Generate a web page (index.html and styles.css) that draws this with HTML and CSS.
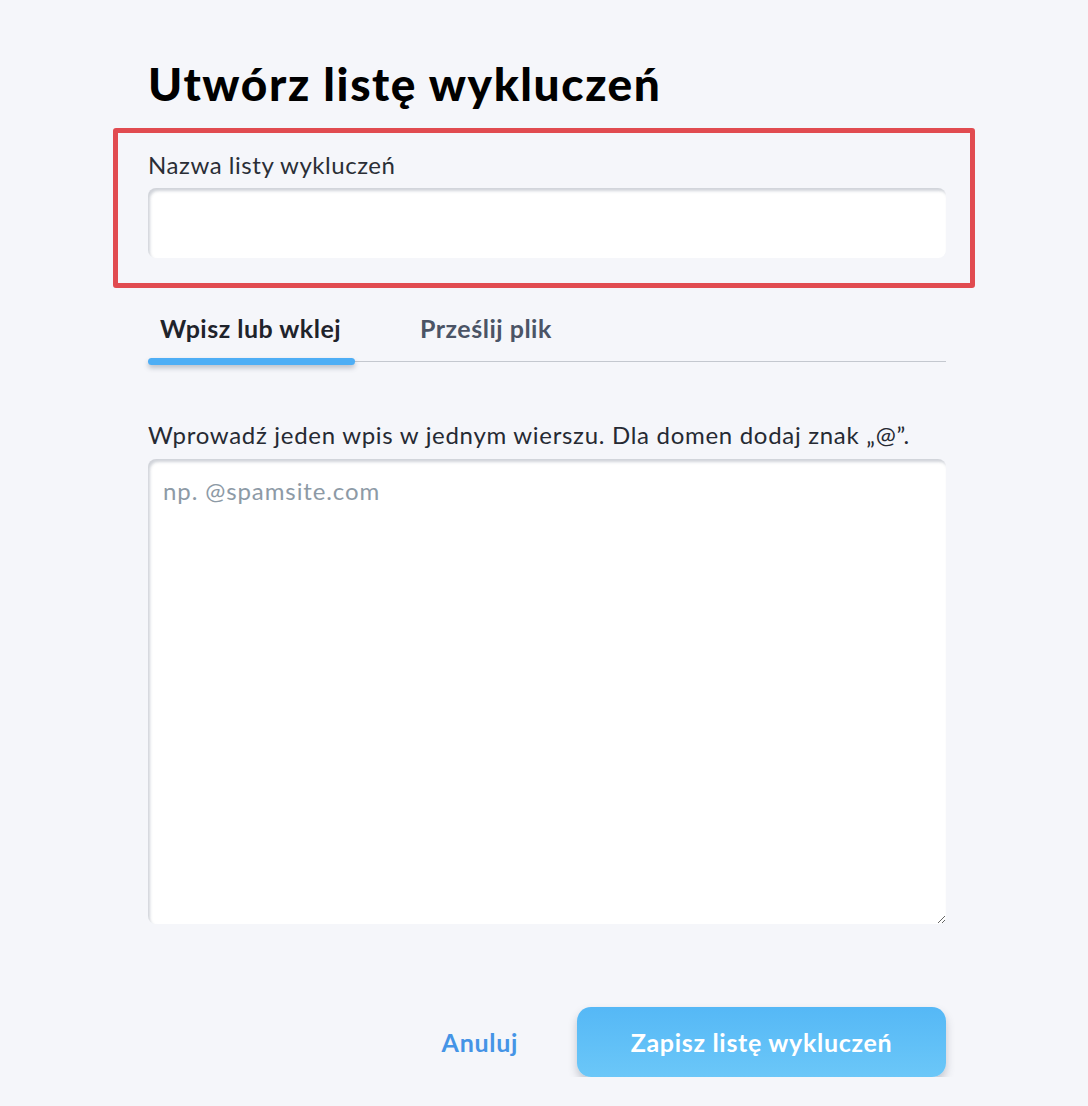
FILE: index.html
```html
<!DOCTYPE html>
<html lang="pl">
<head>
<meta charset="utf-8">
<title>Utwórz listę wykluczeń</title>
<link rel="stylesheet" href="styles.css">
</head>
<body>
<main class="page">
  <h1 class="title">Utwórz listę wykluczeń</h1>
  <div class="highlight">
    <label class="label" for="name">Nazwa listy wykluczeń</label>
    <input class="input" id="name" type="text">
  </div>
  <nav class="tabs">
    <button class="tab tab-active">Wpisz lub wklej</button>
    <button class="tab">Prześlij plik</button>
  </nav>
  <p class="hint">Wprowadź jeden wpis w jednym wierszu. Dla domen dodaj znak „@”.</p>
  <textarea class="textarea" placeholder="np. @spamsite.com"></textarea>
  <div class="actions">
    <button class="btn-link">Anuluj</button>
    <button class="btn-primary">Zapisz listę wykluczeń</button>
  </div>
</main>
</body>
</html>
```

FILE: styles.css
```css
html, body {
  margin: 0;
  background: #f5f6fa;
}
body {
  font-family: Lato, "Noto Sans", sans-serif;
  color: #262a33;
}
.page {
  width: 798px;
  margin-left: 148px;
  padding-top: 56px;
  display: flex;
  flex-direction: column;
}
.title {
  margin: 0;
  font-size: 46px;
  font-weight: 900;
  color: #000;
  line-height: 56px;
  letter-spacing: 1.6px;
}
.highlight {
  margin: 16px -29px 0 -35px;
  padding: 17px 24px 25px 30px;
  border: 5px solid #e14b50;
  border-radius: 3px;
  display: flex;
  flex-direction: column;
}
.label {
  font-size: 24px;
  line-height: 30px;
  letter-spacing: 0.55px;
  color: #2a2e36;
  margin-bottom: 8px;
}
.input, .textarea {
  border: none;
  outline: none;
  background: #fff;
  border-radius: 8px;
  box-shadow: inset 2px 3px 3px rgba(120, 130, 145, 0.35);
  font-family: inherit;
  box-sizing: border-box;
}
.input {
  height: 70px;
  width: 100%;
}
.tabs {
  margin-top: 22px;
  display: flex;
  align-items: flex-start;
  gap: 53px;
  border-bottom: 1px solid #c4c8cf;
  height: 51px;
}
.tab {
  border: none;
  background: none;
  font-family: inherit;
  font-size: 25px;
  letter-spacing: 0.5px;
  font-weight: 700;
  color: #4b5466;
  padding: 0 12px 15px;
  height: 51px;
  line-height: 36px;
  display: block;
  position: relative;
  text-align: left;
  box-sizing: border-box;
}
.tab-active {
  color: #1f232b;
  width: 207px;
}
.tab-active::after {
  content: "";
  position: absolute;
  left: 0;
  right: 0;
  bottom: -4px;
  height: 7px;
  border-radius: 4px;
  background: #4eaef5;
  box-shadow: 0 3px 5px rgba(60, 70, 90, 0.3);
}
.hint {
  margin: 58px 0 9px;
  font-size: 24px;
  line-height: 30px;
  letter-spacing: 0.7px;
  color: #262a33;
}
.textarea {
  height: 465px;
  width: 100%;
  resize: vertical;
  padding: 17px 15px;
  font-size: 24px;
  letter-spacing: 0.9px;
  color: #262a33;
}
.textarea::placeholder {
  color: #8d9aa6;
}
.actions {
  margin-top: 83px;
  display: flex;
  justify-content: flex-end;
  align-items: center;
}
.btn-link {
  border: none;
  background: none;
  font-family: inherit;
  font-size: 25px;
  letter-spacing: 0.7px;
  font-weight: 700;
  color: #4594e6;
  padding: 0;
  margin-right: 59px;
}
.btn-primary {
  border: none;
  width: 369px;
  height: 70px;
  border-radius: 14px;
  background: linear-gradient(#55b8f6, #6bc7f8);
  color: #fff;
  font-family: inherit;
  font-size: 25px;
  letter-spacing: 0.7px;
  font-weight: 700;
  box-shadow: 0 5px 8px rgba(60, 70, 90, 0.28);
}
```
